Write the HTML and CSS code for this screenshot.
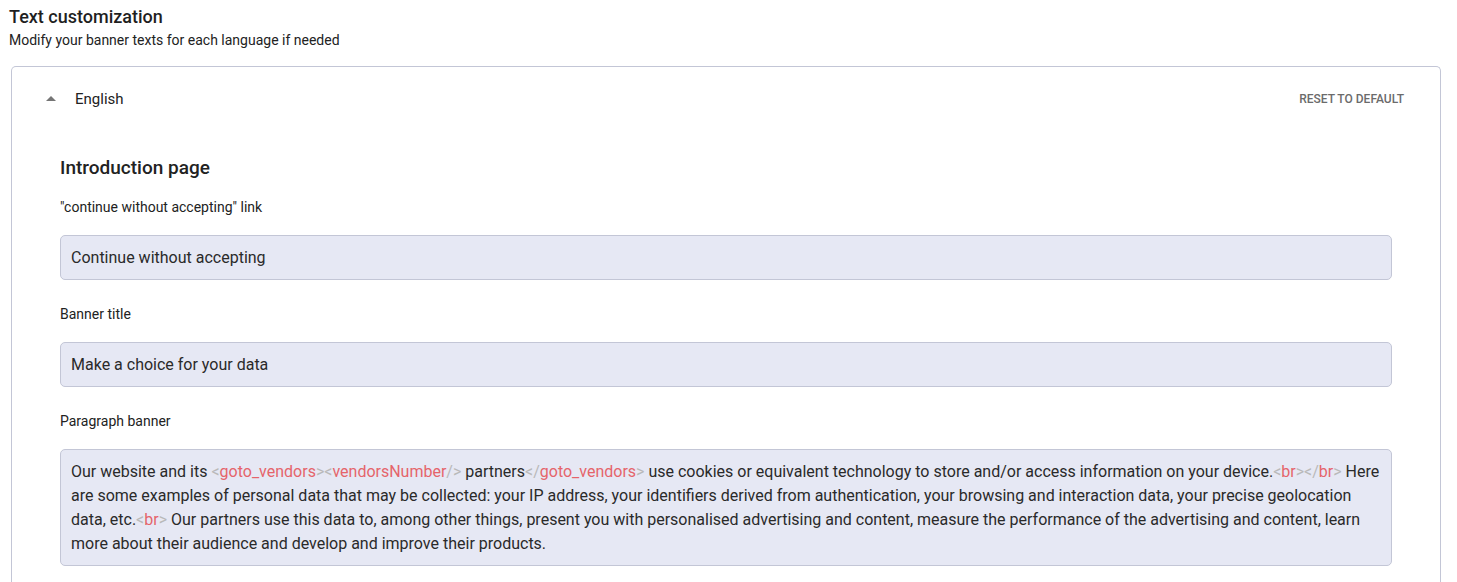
FILE: index.html
```html
<!DOCTYPE html>
<html lang="en">
<head>
<meta charset="utf-8">
<title>Text customization</title>
<link rel="stylesheet" href="styles.css">
</head>
<body>
<div class="page">
  <h2 class="title">Text customization</h2>
  <p class="subtitle">Modify your banner texts for each language if needed</p>
  <div class="card">
    <div class="card-header">
      <div class="lang">
        <svg class="arrow" viewBox="0 0 24 24" width="24" height="24"><path d="M7 14l5-5 5 5z" fill="#757575"/></svg>
        <span>English</span>
      </div>
      <button class="reset">Reset to default</button>
    </div>
    <div class="card-body">
      <h3 class="section">Introduction page</h3>
      <div class="field">
        <div class="label">"continue without accepting" link</div>
        <div class="input">Continue without accepting</div>
      </div>
      <div class="field">
        <div class="label">Banner title</div>
        <div class="input">Make a choice for your data</div>
      </div>
      <div class="field">
        <div class="label">Paragraph banner</div>
        <div class="textarea">Our website and its <span class="b">&lt;</span><span class="t">goto_vendors</span><span class="b">&gt;&lt;</span><span class="t">vendorsNumber</span><span class="b">/&gt;</span> partners<span class="b">&lt;/</span><span class="t">goto_vendors</span><span class="b">&gt;</span> use cookies or equivalent technology to store and/or access information on your device.<span class="b">&lt;</span><span class="t">br</span><span class="b">&gt;&lt;/</span><span class="t">br</span><span class="b">&gt;</span> Here are some examples of personal data that may be collected: your IP address, your identifiers derived from authentication, your browsing and interaction data, your precise geolocation data, etc.<span class="b">&lt;</span><span class="t">br</span><span class="b">&gt;</span> Our partners use this data to, among other things, present you with personalised advertising and content, measure the performance of the advertising and content, learn more about their audience and develop and improve their products.</div>
      </div>
    </div>
  </div>
</div>
</body>
</html>
```

FILE: styles.css
```css
* { box-sizing: border-box; }
html, body { margin: 0; padding: 0; background: #fff; }
body {
  font-family: Roboto, "Liberation Sans", Arial, sans-serif;
  color: #222;
}
.page {
  padding: 7px 0 0 9px;
}
.title {
  margin: 0;
  font-size: 18px;
  line-height: 20px;
  font-weight: 500;
  color: #1f1f1f;
}
.subtitle {
  margin: 4px 0 0;
  font-size: 14px;
  line-height: 18px;
  color: #222;
}
.card {
  margin: 17px 0 0 2px;
  width: 1430px;
  border: 1px solid #c3c6d6;
  border-bottom: none;
  border-radius: 5px 5px 0 0;
  height: 600px;
}
.card-header {
  height: 63px;
  display: flex;
  align-items: center;
  justify-content: space-between;
  padding: 0 36px 0 27px;
}
.lang {
  display: flex;
  align-items: center;
  gap: 12px;
  font-size: 15px;
  color: #222;
}
.arrow { display: block; }
.reset {
  border: none;
  background: none;
  padding: 0;
  font-family: inherit;
  font-size: 12px;
  font-weight: 500;
  text-transform: uppercase;
  color: #6b6b6b;
}
.card-body {
  padding: 26px 47px 0 48px;
}
.section {
  margin: 0;
  font-size: 19px;
  line-height: 24px;
  font-weight: 500;
  color: #222;
}
.field {
  margin-top: 19px;
}
.field + .field { margin-top: 26px; }
.label {
  font-size: 14px;
  line-height: 16px;
  color: #222;
  margin-bottom: 20px;
}
.input, .textarea {
  width: 1332px;
  background: #e6e8f4;
  border: 1px solid #c3c6d6;
  border-radius: 5px;
  font-size: 16px;
  color: #2a2a2a;
  padding: 9px 10px;
  line-height: 25px;
}
.textarea {
  line-height: 24px;
  padding: 10px 10px 9px;
}
.b { color: #b9b9b9; }
.t { color: #e5646b; }
```
